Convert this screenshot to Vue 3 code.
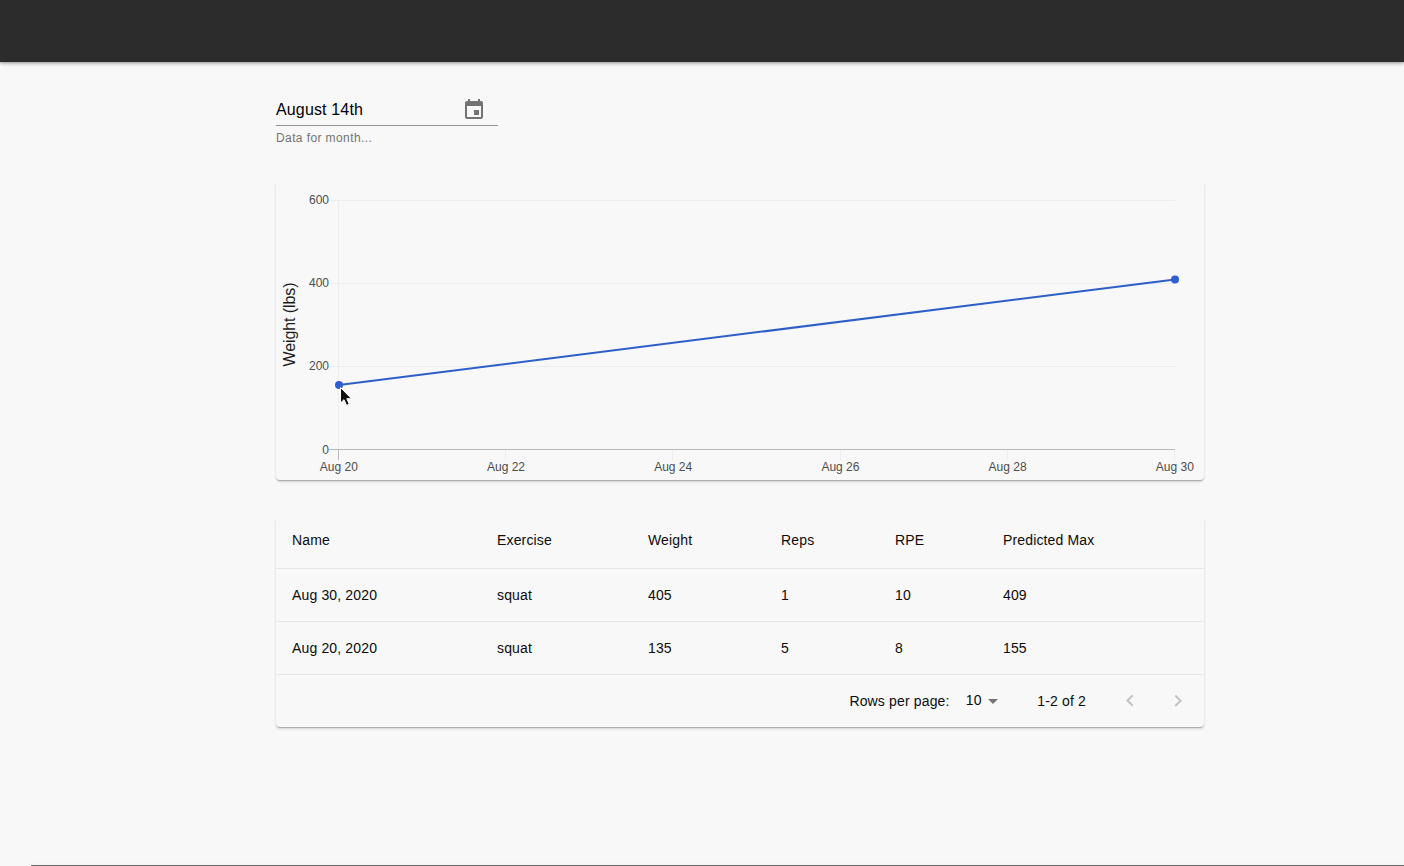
<script setup>
const columns = ['Name', 'Exercise', 'Weight', 'Reps', 'RPE', 'Predicted Max']
const rows = [
  ['Aug 30, 2020', 'squat', '405', '1', '10', '409'],
  ['Aug 20, 2020', 'squat', '135', '5', '8', '155'],
]
const yTicks = [
  { label: '600', y: 19.5, baseline: 23 },
  { label: '400', y: 102.5, baseline: 106 },
  { label: '200', y: 185.5, baseline: 189 },
  { label: '0', y: 268.5, baseline: 273 },
]
const xTicks = ['Aug 20', 'Aug 22', 'Aug 24', 'Aug 26', 'Aug 28', 'Aug 30'].map((label, i) => ({
  label,
  x: 62.5 + i * 167.2,
}))
</script>

<template>
  <div class="page">
    <header class="bar"></header>
    <main class="content">
      <div class="picker">
        <div class="field">
          <span class="value">August 14th</span>
          <svg class="calendar" viewBox="0 0 24 24" width="24" height="24">
            <path d="M17 12h-5v5h5v-5zM16 1v2H8V1H6v2H5c-1.11 0-1.99.9-1.99 2L3 19c0 1.1.89 2 2 2h14c1.1 0 2-.9 2-2V5c0-1.1-.9-2-2-2h-1V1h-2zm3 18H5V8h14v11z" />
          </svg>
        </div>
        <div class="helper">Data for month...</div>
      </div>

      <section class="card chart">
        <svg width="928" height="299" viewBox="0 0 928 299">
          <g class="grid">
            <line v-for="t in yTicks.slice(0, 3)" :key="t.label" x1="53" x2="899" :y1="t.y" :y2="t.y" />
            <line x1="62.5" x2="62.5" y1="19" y2="268" />
            <line v-for="t in xTicks.slice(1)" :key="t.label" :x1="Math.floor(t.x) + 0.5" :x2="Math.floor(t.x) + 0.5" y1="269" y2="279" />
          </g>
          <path class="axis" d="M53 268.5H899M62.5 268V279" />
          <g class="labels">
            <text v-for="t in yTicks" :key="t.label" x="53" :y="t.baseline" text-anchor="end">{{ t.label }}</text>
            <text v-for="t in xTicks" :key="t.label" :x="t.x + 0.3" y="290" text-anchor="middle">{{ t.label }}</text>
          </g>
          <text class="title" transform="translate(19 143.5) rotate(-90)" text-anchor="middle" textLength="84">Weight (lbs)</text>
          <path class="line" d="M63 204L899 98.5" />
          <circle class="dot" cx="63" cy="204" r="4" />
          <circle class="dot" cx="899" cy="98.5" r="4" />
          <path class="pointer" d="M64.5 206.5V222L68 218.7L70.6 224.4L73.3 223.2L70.8 217.7H75.5Z" />
        </svg>
      </section>

      <section class="card table">
        <div class="row">
          <span v-for="c in columns" :key="c">{{ c }}</span>
        </div>
        <div v-for="r in rows" :key="r[0]" class="row">
          <span v-for="(c, i) in r" :key="i">{{ c }}</span>
        </div>
        <div class="footer">
          <span>Rows per page:</span>
          <span class="select">10</span>
          <svg class="caret" width="24" height="24" viewBox="0 0 24 24"><path d="M7 10l5 5 5-5z" /></svg>
          <span class="range">1-2 of 2</span>
          <svg class="prev" width="24" height="24" viewBox="0 0 24 24"><path d="M15.41 16.09l-4.58-4.59 4.58-4.59L14 5.5l-6 6 6 6z" /></svg>
          <svg class="next" width="24" height="24" viewBox="0 0 24 24"><path d="M8.59 16.34l4.58-4.59-4.58-4.59L10 5.75l6 6-6 6z" /></svg>
        </div>
      </section>
    </main>
    <div class="panel-edge"></div>
  </div>
</template>

<style>
body {
  background: #f8f8f8;
  overflow: hidden;
}
</style>

<style scoped>
.page {
  height: 866px;
  display: flex;
  flex-direction: column;
  overflow: hidden;
  background: #f8f8f8;
  color: #0c0c0c;
  font-family: "Liberation Sans", Arial, sans-serif;
}
.bar {
  height: 62px;
  flex: none;
  background: #2c2c2c;
  box-shadow: 0 1px 3px rgba(0, 0, 0, 0.3), 0 2px 4px rgba(0, 0, 0, 0.12);
}
.content {
  width: 928px;
  margin-left: 276px;
  flex: 1;
}
.picker {
  width: 222px;
  height: 87px;
  padding-top: 32px;
}
.field {
  height: 31px;
  display: flex;
  align-items: center;
  justify-content: space-between;
  border-bottom: 1px solid #939393;
}
.value {
  font-size: 16px;
  letter-spacing: 0.15px;
  color: #000;
}
.calendar {
  margin-right: 12px;
  fill: #747474;
}
.helper {
  margin-top: 5px;
  font-size: 12px;
  line-height: 14px;
  letter-spacing: 0.4px;
  color: #747474;
}
.card {
  border-radius: 4px;
  box-shadow: 0 2px 1px -1px rgba(0, 0, 0, 0.16), 0 1px 1px rgba(0, 0, 0, 0.1), 0 2px 3px rgba(0, 0, 0, 0.12);
  clip-path: inset(3px -6px -8px -6px);
  background: #f8f8f8;
}
.chart {
  height: 299px;
}
.chart svg {
  display: block;
}
.grid line {
  stroke: #ededed;
}
.axis {
  fill: none;
  stroke: #b9b9b9;
}
.labels text {
  font-size: 12px;
  fill: #4d4d4d;
}
.title {
  font-size: 16px;
  fill: #1c1c1c;
}
.line {
  stroke: #2d5fc8;
  stroke-width: 2;
}
.dot {
  fill: #2d5fd2;
}
.pointer {
  fill: #111;
  stroke: #fff;
  stroke-width: 1;
}
.table {
  height: 211px;
  margin-top: 36px;
  font-size: 14px;
  letter-spacing: 0.15px;
}
.row {
  display: grid;
  grid-template-columns: 205px 151px 133px 114px 108px 1fr;
  height: 52px;
  line-height: 48px;
  border-bottom: 1px solid #e5e5e5;
}
.row + .row {
  line-height: 52px;
}
.row span {
  padding-left: 16px;
}
.footer {
  display: flex;
  align-items: center;
  height: 52px;
  padding-left: 573.4px;
}
.select {
  width: 15px;
  margin: -2px 0 0 16.2px;
}
.caret {
  fill: #747474;
}
.range {
  margin-left: 32.6px;
}
.prev,
.next {
  fill: #c3c3c3;
}
.prev {
  margin-left: auto;
}
.next {
  margin: 0 14px 0 24px;
}
.panel-edge {
  height: 1px;
  flex: none;
  margin-left: 31px;
  background: #666;
  box-shadow: 0 0 6px rgba(0, 0, 0, 0.08);
}
</style>
